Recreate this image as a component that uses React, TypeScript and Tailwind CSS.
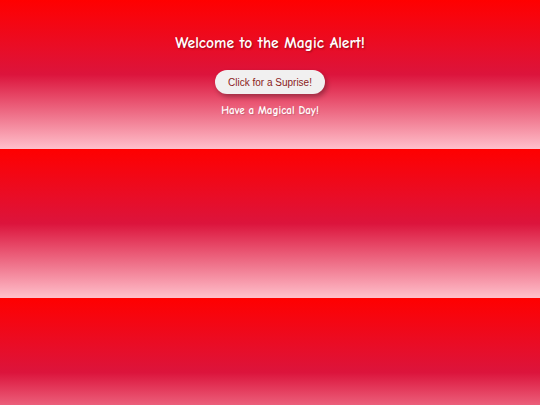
import React from "react";

export default function App() {
  return (
    <div className="min-h-[405px] w-full bg-[linear-gradient(#ff0000,#dc143c,#ffc0cb)] bg-[length:100%_149px] bg-repeat-y">
      <div className="flex flex-col items-center pt-[33px] font-['Comic_Neue','Comic_Sans_MS',cursive]">
        <h1 className="text-[15.5px] font-bold leading-[20px] text-white [text-shadow:1px_1px_2px_rgba(0,0,0,0.35)]">
          Welcome to the Magic Alert!
        </h1>
        <button className="mt-[17px] flex h-[24px] w-[110px] items-center justify-center rounded-full bg-[#f1f0f0] font-['Liberation_Sans',Arial,sans-serif] text-[10px] text-[#8b1a1a] shadow-[2px_3px_5px_rgba(0,0,0,0.3)]">
          Click for a Suprise!
        </button>
        <p className="mt-[9px] text-[11px] font-bold leading-[16px] text-white [text-shadow:1px_1px_1px_rgba(0,0,0,0.15)]">
          Have a Magical Day!
        </p>
      </div>
    </div>
  );
}
